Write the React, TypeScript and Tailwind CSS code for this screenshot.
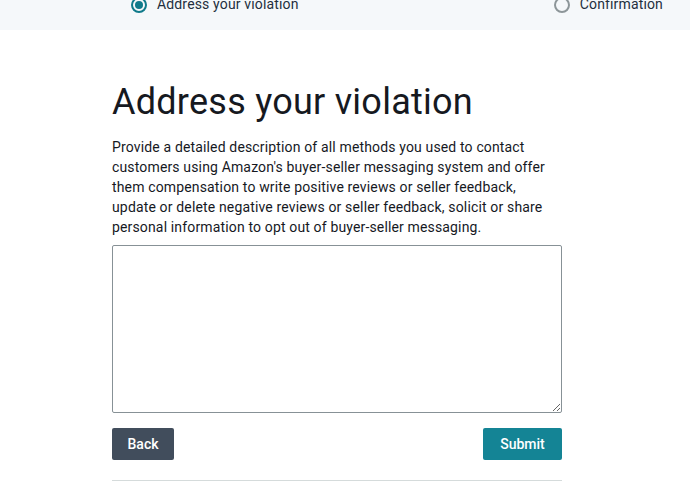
import React from 'react'

const Radio = ({ checked }: { checked?: boolean }) => (
  <span
    className={
      checked
        ? 'flex h-[16px] w-[16px] items-center justify-center rounded-full border-2 border-[#0f7a8a]'
        : 'flex h-[16px] w-[16px] items-center justify-center rounded-full border-2 border-[#8d9699]'
    }
  >
    {checked && <span className='h-[8px] w-[8px] rounded-full bg-[#0f7a8a]' />}
  </span>
)

const App = () => {
  return (
    <div className='min-h-screen bg-white font-["Roboto",sans-serif] text-[#16191f]'>
      <div className='h-[30px] overflow-hidden bg-[#f5f8fa]'>
        <div className='-mt-[6px] flex items-center justify-between pl-[131px] pr-[27px]'>
          <div className='flex items-center gap-[10px]'>
            <Radio checked />
            <span className='text-[14px] tracking-[0.15px] text-[#232f3e]'>Address your violation</span>
          </div>
          <div className='flex items-center gap-[10px]'>
            <Radio />
            <span className='text-[14px] tracking-[0.15px] text-[#232f3e]'>Confirmation</span>
          </div>
        </div>
      </div>

      <div className='mx-[112px] w-[450px] pt-[50px]'>
        <h1 className='text-[36px] leading-[44px] font-normal tracking-[0.25px] text-[#16191f]'>
          Address your violation
        </h1>
        <p className='mt-[13px] text-[14px] leading-[20px] tracking-[0.15px] text-[#16191f]'>
          Provide a detailed description of all methods you used to contact
          <br />
          customers using Amazon's buyer-seller messaging system and offer
          <br />
          them compensation to write positive reviews or seller feedback,
          <br />
          update or delete negative reviews or seller feedback, solicit or share
          <br />
          personal information to opt out of buyer-seller messaging.
        </p>
        <textarea className='mt-[8px] block h-[168px] w-full rounded-[2px] border border-[#879196] bg-white outline-none' />
        <div className='mt-[15px] flex items-center justify-between'>
          <button className='h-[32px] w-[62px] rounded-[2px] bg-[#414d5c] text-[14px] font-medium text-white'>
            Back
          </button>
          <button className='h-[32px] w-[79px] rounded-[2px] bg-[#148495] text-[14px] font-medium text-white'>
            Submit
          </button>
        </div>
        <div className='mt-[20px] border-t border-[#d5dbdb]' />
      </div>
    </div>
  )
}

export default App
